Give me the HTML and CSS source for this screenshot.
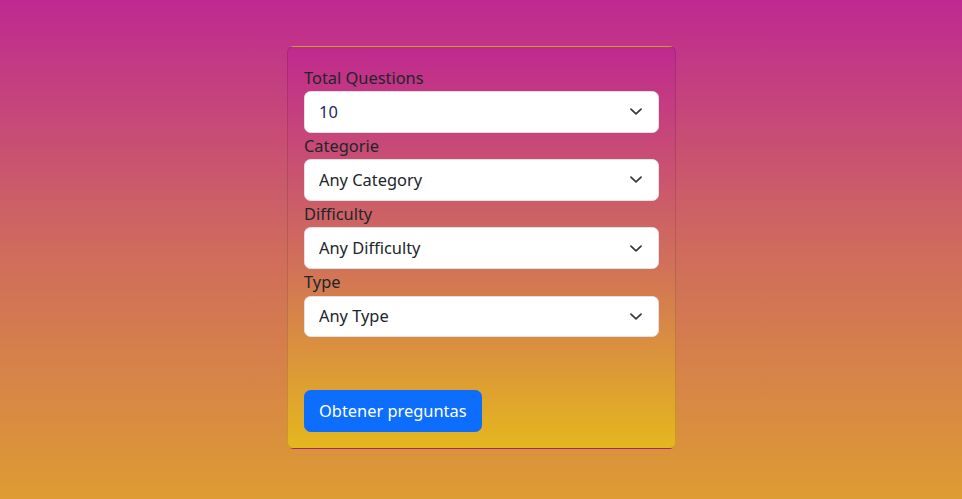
FILE: index.html
```html
<!DOCTYPE html>
<html lang="es">
<head>
<meta charset="utf-8">
<title>Trivia</title>
<link rel="stylesheet" href="styles.css">
</head>
<body>
<main class="page">
  <form class="card">
    <label class="label" for="q">Total Questions</label>
    <div class="select-wrap">
      <select id="q" class="select select-num"><option>10</option></select>
    </div>
    <label class="label" for="c">Categorie</label>
    <div class="select-wrap">
      <select id="c" class="select"><option>Any Category</option></select>
    </div>
    <label class="label" for="d">Difficulty</label>
    <div class="select-wrap">
      <select id="d" class="select"><option>Any Difficulty</option></select>
    </div>
    <label class="label" for="t">Type</label>
    <div class="select-wrap">
      <select id="t" class="select"><option>Any Type</option></select>
    </div>
    <div class="actions">
      <button type="button" class="btn">Obtener preguntas</button>
    </div>
  </form>
</main>
</body>
</html>
```
FILE: styles.css
```css
html, body {
  margin: 0;
  padding: 0;
  height: 100%;
}
body {
  background: linear-gradient(to bottom, #be2991 0%, #cf6b5d 50%, #de9c33 100%);
  font-family: "Noto Sans", "Open Sans", sans-serif;
  font-size: 16.4px;
  line-height: 26.4px;
  color: #212529;
}
.page {
  display: flex;
  justify-content: center;
  padding-top: 46px;
  padding-left: 1px;
}
.card {
  width: 355px;
  padding: 17.6px 16px 16px;
  display: flex;
  flex-direction: column;
  background-image: linear-gradient(to bottom, #bf298f 0%, #d17258 55%, #e5b71e 100%);
  background-origin: padding-box;
  background-clip: border-box;
  background-repeat: repeat;
  border: 1px solid rgba(0, 0, 0, 0.12);
  border-radius: 6.6px;
}
.label {
  display: block;
  height: 26.4px;
}
.select-wrap {
  position: relative;
}
.select {
  display: block;
  width: 100%;
  height: 41.8px;
  box-sizing: border-box;
  padding: 6.6px 40px 6.6px 14px;
  font-family: inherit;
  font-size: 16.4px;
  line-height: 26.4px;
  color: #212529;
  background-color: #fff;
  background-image: url("data:image/svg+xml,%3csvg xmlns='http://www.w3.org/2000/svg' viewBox='0 0 16 16'%3e%3cpath fill='none' stroke='%23343a40' stroke-linecap='round' stroke-linejoin='round' stroke-width='2' d='m2 5 6 6 6-6'/%3e%3c/svg%3e");
  background-repeat: no-repeat;
  background-position: right 13.2px center;
  background-size: 17.6px 13.2px;
  border: 1px solid #dee2e6;
  border-radius: 6.6px;
  appearance: none;
  -webkit-appearance: none;
}
.select-num {
  color: #1a2a5e;
}
.actions {
  padding-top: 53px;
}
.btn {
  font-family: inherit;
  font-size: 16.4px;
  line-height: 26.4px;
  color: #fff;
  background: #0d6efd;
  border: 1px solid #0d6efd;
  border-radius: 6.6px;
  padding: 6.6px 14px;
  height: 41.8px;
  cursor: pointer;
}
```
